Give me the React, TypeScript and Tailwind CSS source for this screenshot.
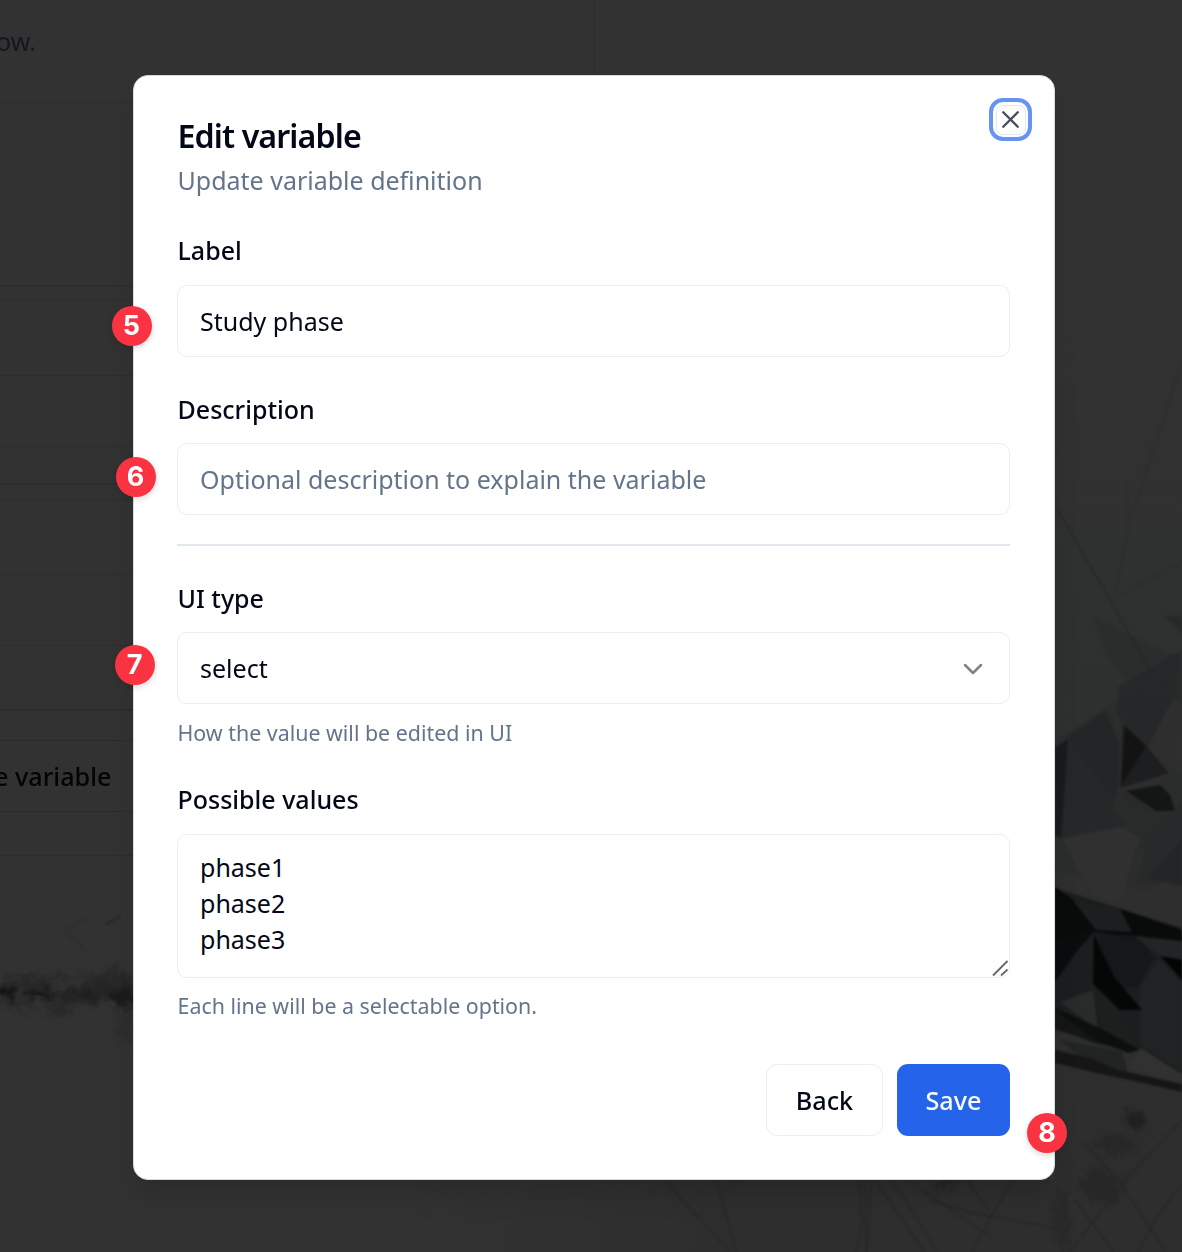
import React from "react";
import { ChevronDown, X } from "lucide-react";

type Shape = [points: string, fill: string, opacity?: number];

const facets: Shape[] = [
  ["1093,616 1140,640 1182,660 1182,700 1130,687 1107,655", "#292b2b", 0.7],
  ["1164,616 1182,616 1182,634", "#262727", 0.8],
  ["1072,730 1118,700 1156,672 1182,656 1182,900 1055,870 1055,745", "#2a2b2c", 0.85],
  ["1118,687 1150,668 1182,650 1174,700 1147,748 1124,725 1117,712", "#26282a", 0.9],
  ["1174,697 1182,705 1182,775 1160,762 1147,748", "#2e2e2e"],
  ["1067,737 1106,710 1120,745 1119,785 1112,807", "#242628", 0.9],
  ["1067,740 1114,800 1112,810 1126,826 1060,838", "#262829", 0.9],
  ["1055,748 1068,739 1061,838 1055,835", "#181b1d"],
  ["1123,725 1148,748 1170,775 1121,788", "#1c1e1f"],
  ["1125,726 1146,746 1121,786", "#131313"],
  ["1121,788 1172,772 1162,784 1122,792", "#2d2d2d"],
  ["1126,791 1160,785 1170,795 1175,811 1156,811", "#141515"],
  ["1114,808 1124,792 1155,812 1178,812 1182,860 1140,850", "#292a2a"],
  ["1062,838 1120,827 1140,838 1120,903 1095,896 1082,878", "#303030"],
  ["1138,880 1150,840 1182,800 1182,870 1150,885", "#27292a"],
  ["1148,878 1182,838 1182,886 1168,882", "#232526"],
  ["1122,902 1165,882 1182,886 1182,922 1120,903", "#2e2e2e"],
  ["1055,888 1182,928 1182,1075 1145,1050 1132,1048 1055,1030", "#1b1d1e"],
  ["1055,887 1072,899 1120,909 1182,930 1182,941 1140,938 1095,932 1055,940", "#090a0a"],
  ["1072,899 1120,909 1132,932 1096,930", "#1c1f20"],
  ["1055,940 1094,932 1078,950 1055,982", "#0b0c0d"],
  ["1055,982 1082,958 1093,965 1093,985 1055,1002", "#1b1e20"],
  ["1097,934 1137,936 1154,958 1138,986 1122,988 1104,960", "#15181a"],
  ["1135,936 1182,941 1182,960 1160,956", "#222425"],
  ["1160,956 1182,960 1182,980 1170,966", "#030404"],
  ["1140,986 1159,960 1182,982 1182,1072 1140,1045", "#202223"],
  ["1094,933 1101,950 1115,978 1142,1010 1120,1010 1093,984", "#050606"],
  ["1060,1002 1093,990 1098,1030", "#292a2a"],
  ["1093,985 1118,1010 1138,1048 1102,1030", "#1d1f1f"],
  ["1055,1007 1102,1031 1126,1050 1094,1043 1055,1028", "#141515"],
  ["1055,1009 1075,1017 1104,1030 1140,1050 1128,1053 1092,1038", "#0d0e0e"],
  ["1060,1040 1122,1051 1128,1074 1090,1065", "#222323"],
  ["1055,1050 1090,1058 1118,1070 1182,1084 1182,1092 1148,1084 1110,1076 1055,1063", "#161616"],
  ["1140,1048 1182,1074 1182,1084 1126,1069", "#313131"],
];

const threads: string[] = [
  "M1055,505L1110,600L1152,675L1182,702",
  "M665,1181L730,1252",
  "M716,1181L723,1204L736,1252",
  "M738,1181L722,1192",
  "M859,1181L862,1220L856,1252",
  "M871,1181L867,1252M864,1181L866,1252",
  "M893,1181L938,1252M910,1181L992,1238",
  "M1012,1181L992,1215L972,1252M968,1181L990,1212",
  "M876,1181L924,1252M930,1200L968,1212L1065,1230",
  "M1084,1143L1118,1180L1166,1252",
  "M1182,1120L1125,1180L1070,1252",
  "M1182,1184L1158,1215L1138,1252M1075,1200L1114,1252",
];

const rubble: [number, number, number, number, string][] = [
  [6, 993, 12, 7, "#141414"], [40, 994, 15, 5, "#151515"], [70, 996, 15, 8, "#242424"],
  [91, 994, 14, 9, "#202020"], [113, 984, 22, 15, "#252525"], [124, 998, 14, 10, "#1b1b1b"],
  [29, 982, 24, 6, "#272727"], [59, 1009, 12, 7, "#292929"], [22, 1004, 19, 5, "#292929"],
  [124, 1028, 10, 15, "#2d2d2d"], [60, 977, 14, 4, "#292929"], [99, 977, 26, 4, "#2a2a2a"],
];

function Photo() {
  return (
    <svg className="absolute inset-0 h-full w-full" viewBox="0 0 1182 1252" aria-hidden="true">
      <defs>
        <filter id="edge" colorInterpolationFilters="sRGB"><feGaussianBlur stdDeviation="0.8" /></filter>
        <filter id="smoke" x="-50%" y="-50%" width="200%" height="200%" colorInterpolationFilters="sRGB">
          <feGaussianBlur stdDeviation="3" result="soft" />
          <feTurbulence type="fractalNoise" baseFrequency="0.09" numOctaves="3" seed="4" />
          <feDisplacementMap in="soft" scale="18" xChannelSelector="R" yChannelSelector="G" />
        </filter>
        <linearGradient id="shade" x1="0" y1="0" x2="0" y2="1">
          <stop offset="0.25" stopColor="#2e2f2f" stopOpacity="0" />
          <stop offset="0.5" stopColor="#2e2f2f" stopOpacity="0.8" />
          <stop offset="1" stopColor="#2d2d2d" />
        </linearGradient>
        <linearGradient id="floor">
          <stop offset="0" stopColor="#2e2e2e" stopOpacity="0" />
          <stop offset="0.4" stopColor="#2e2e2e" />
        </linearGradient>
      </defs>
      <rect x="1055" width="127" height="1252" fill="url(#shade)" />
      <rect x="400" y="1180" width="782" height="72" fill="url(#floor)" />
      <g filter="url(#edge)">
        {facets.map(([points, fill, opacity]) => (
          <polygon key={points} points={points} fill={fill} opacity={opacity ?? 1} />
        ))}
        {threads.map((d) => (
          <path key={d} d={d} fill="none" stroke="#222323" strokeWidth="1.4" opacity="0.65" />
        ))}
        <path
          d="M1126,482L1128,530L1114,600L1136,586L1182,562M1182,362L1130,520"
          fill="none"
          stroke="#292a2a"
          strokeWidth="1.4"
          opacity="0.5"
        />
        <path d="M106,924l9,-5l6,-2" fill="none" stroke="#242424" strokeWidth="1.5" />
        <path d="M64,932l15,12l9,10M87,918l-24,14" fill="none" stroke="#2e2e2e" strokeWidth="2" />
      </g>
      <g filter="url(#smoke)">
        {rubble.map(([cx, cy, rx, ry, fill]) => (
          <ellipse key={`${cx}-${cy}`} cx={cx} cy={cy} rx={rx} ry={ry} fill={fill} />
        ))}
        <ellipse cx="1136" cy="1120" rx="12" ry="9" fill="#202020" />
        <ellipse cx="1116" cy="1145" rx="20" ry="10" fill="#272727" />
        <ellipse cx="1102" cy="1187" rx="20" ry="17" fill="#272727" />
        <ellipse cx="1062" cy="1220" rx="9" ry="30" fill="#292929" />
        <ellipse cx="945" cy="1184" rx="14" ry="5" fill="#242424" />
      </g>
    </svg>
  );
}

function Backdrop() {
  return (
    <div className="absolute inset-0 bg-[#323232]" aria-hidden="true">
      <Photo />
      <div className="relative flex h-[856px] w-[595px] flex-col border-b border-[#2c2c2c]">
        <div className="h-[103px] border-r border-b border-[#2d2d2d] pt-[23px]">
          <p className="-ml-[4px] text-[25px] leading-[36px] text-[#14181e]">ow.</p>
        </div>
        <div className="h-[184px] border-b-2 border-[#2e2e2e]" />
        <div className="h-[14px] border-b border-[#2d2d2d]" />
        <div className="h-[75px] border-b border-[#2d2d2d]" />
        <div className="h-[71px] border-b border-[#2d2d2d]" />
        <div className="h-[38px] border-b-2 border-[#2d2d2d]" />
        <div className="h-[15px] border-b border-[#2d2d2d]" />
        <div className="h-[75px] border-b border-[#2d2d2d]" />
        <div className="h-[71px] border-b border-[#2d2d2d]" />
        <div className="h-[65px] border-b-2 border-[#2c2c2c]" />
        <div className="h-[30px] border-b border-[#2b2b2b]" />
        <div className="flex h-[71px] items-center border-b border-[#2b2b2b]">
          <p className="-ml-[6px] text-[25.2px] leading-[36px] font-medium whitespace-nowrap text-[#030408]">e variable</p>
        </div>
      </div>
    </div>
  );
}

function Marker({ n, className }: { n: number; className: string }) {
  return (
    <span
      className={`absolute flex size-[40px] items-center justify-center rounded-full bg-[#fa3342] pb-px font-['Inter'] text-[27px] leading-none font-bold text-white shadow-[0_2px_6px_rgba(0,0,0,0.16)] ${className}`}
    >
      {n}
    </span>
  );
}

function Heading({ children, className }: { children: React.ReactNode; className: string }) {
  return <label className={`block text-[25px] leading-[26px] font-medium ${className}`}>{children}</label>;
}

const box = "w-full rounded-[10px] border-[1.8px] border-[#e9eef4] bg-white px-[22px] text-[25px]";

export default function App() {
  return (
    <main className="relative flex h-[1252px] w-[1182px] overflow-hidden font-['Noto_Sans',sans-serif] text-[#020817]">
      <Backdrop />
      <section className="relative mt-[75px] ml-[133px] flex h-[1105px] w-[922px] flex-col rounded-[15px] border border-[#d5dbe2] bg-white pr-[44px] pl-[43px] shadow-[0_18px_27px_-5px_rgba(0,0,0,0.15)]">
        <h1 className="mt-[43px] ml-[0.5px] text-[32.2px] leading-[33px] font-semibold tracking-[-0.9px]">Edit variable</h1>
        <p className="mt-[10px] ml-[0.5px] text-[25px] leading-[36px] text-[#64748b]">Update variable definition</p>

        <Heading className="mt-[39px] ml-[0.5px]">Label</Heading>
        <div className={`${box} mt-[22px] flex h-[72px] shrink-0 items-center pt-[2px]`}>Study phase</div>

        <Heading className="mt-[39px] ml-[0.5px]">Description</Heading>
        <div className={`${box} mt-[21px] flex h-[72px] shrink-0 items-center pt-[2px] text-[#64748b]`}>
          Optional description to explain the variable
        </div>

        <div className="mt-[29px] h-[2px] shrink-0 bg-[#e2e8f0]" />

        <Heading className="mt-[39px] ml-[0.5px]">UI type</Heading>
        <div className={`${box} mt-[21px] flex h-[72px] shrink-0 items-center justify-between pt-[2px]`}>
          <span>select</span>
          <ChevronDown className="-mr-[2px] size-[32px] text-[#808189]" strokeWidth={1.9} />
        </div>
        <p className="mt-[14px] ml-[0.5px] text-[21.4px] leading-[30px] text-[#64748b]">How the value will be edited in UI</p>

        <Heading className="mt-[38px] ml-[0.5px]">Possible values</Heading>
        <div className={`${box} relative mt-[22px] h-[144px] shrink-0 pt-[14px] leading-[36px]`}>
          <p>phase1</p>
          <p>phase2</p>
          <p>phase3</p>
          <svg className="absolute right-0 bottom-0 size-[17px]" viewBox="0 0 17 17" fill="none" stroke="#666" strokeWidth="1.8">
            <path d="M1 15.5L15.5 1M9 15.5L15.5 9.5" />
          </svg>
        </div>
        <p className="mt-[13px] ml-[0.5px] text-[21.4px] leading-[30px] text-[#64748b]">Each line will be a selectable option.</p>

        <div className="mt-[43px] flex justify-end gap-[14px] text-[25.2px] font-medium">
          <button className="h-[72px] w-[117px] rounded-[11px] border-[1.8px] border-[#e9eef4] pt-px">Back</button>
          <button className="h-[72px] w-[113px] rounded-[11px] bg-[#2563eb] pt-px text-[#f8fafc]">Save</button>
        </div>

        <button
          aria-label="Close"
          className="absolute top-[22px] right-[22px] flex size-[43px] items-center justify-center rounded-[14px] border-[4px] border-[#6793f2] bg-white"
        >
          <span className="flex size-[30px] items-center justify-center rounded-[7px] border border-[#dce7fc]">
            <X className="size-[29px] shrink-0 text-[#4b4f5b]" strokeWidth={2} />
          </span>
        </button>
      </section>
      <Marker n={5} className="top-[306px] left-[111.5px]" />
      <Marker n={6} className="top-[457px] left-[115.5px]" />
      <Marker n={7} className="top-[645px] left-[114.5px]" />
      <Marker n={8} className="top-[1113px] left-[1027px]" />
    </main>
  );
}
